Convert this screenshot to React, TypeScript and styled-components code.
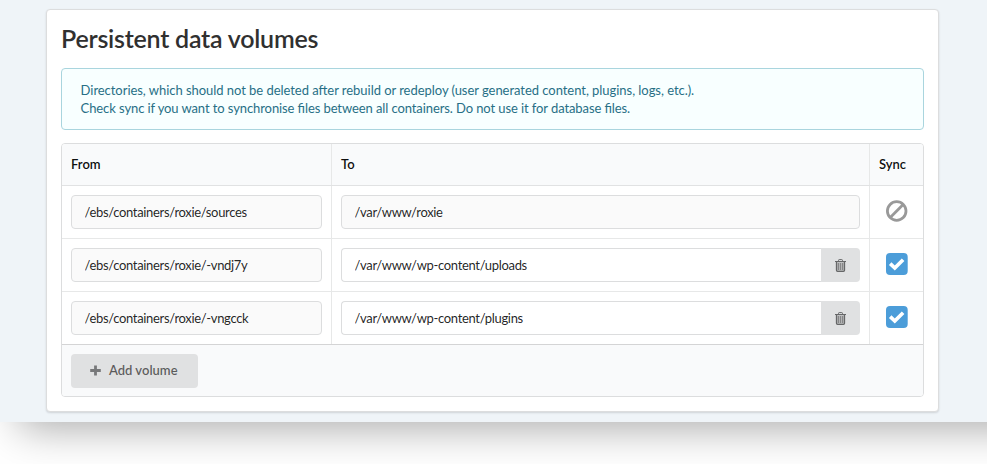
import React from "react";
import styled, { createGlobalStyle } from "styled-components";

const GlobalStyle = createGlobalStyle`
  *, *::before, *::after { box-sizing: border-box; }
  body {
    margin: 0;
    background: #fff;
    color: rgba(0, 0, 0, 0.87);
    font-family: Lato, "Liberation Sans", sans-serif;
    font-size: 13px;
    line-height: 18px;
  }
`;

const Viewport = styled.div`
  height: 464px;
  overflow: hidden;
`;

const Page = styled.main`
  width: 1100px;
  height: 422px;
  padding: 9px 0 0 46px;
  background: #eff4f8;
  box-shadow: 19px 6px 40px rgba(0, 0, 0, 0.34);
`;

const Card = styled.section`
  width: 893px;
  height: 403px;
  padding: 13px 14px 14px;
  background: #fff;
  border: 1px solid #dcddde;
  border-radius: 4px;
  box-shadow: 0 1px 2px rgba(34, 36, 38, 0.15);
`;

const Title = styled.h2`
  margin: 0 0 14px;
  font-size: 25px;
  line-height: 31px;
  font-weight: 600;
  letter-spacing: -0.23px;
  color: #303030;
`;

const Notice = styled.p`
  margin: 0 0 13px;
  height: 62px;
  padding: 12px 18.6px;
  border: 1px solid #a9d5de;
  border-radius: 4px;
  background: #f8ffff;
  color: #276f86;
`;

const NoticeLine = styled.span<{ $tracking: number }>`
  display: block;
  letter-spacing: ${(p) => p.$tracking}px;
  font-feature-settings: "liga" 1;
  white-space: nowrap;
`;

const Table = styled.div`
  border: 1px solid #dcddde;
  border-radius: 4px;
  overflow: hidden;
`;

const Row = styled.div<{ $last?: boolean }>`
  display: grid;
  grid-template-columns: 270px 538px 53px;
  height: 53px;
  border-bottom: 1px solid ${(p) => (p.$last ? "#d4d4d5" : "#e7e8e8")};
`;

const HeaderRow = styled(Row)`
  height: 42px;
  background: #f9fafb;
  border-bottom-color: #e1e2e3;
  color: rgba(0, 0, 0, 0.95);
  font-weight: 600;
`;

const Cell = styled.div<{ $center?: boolean }>`
  display: flex;
  align-items: center;
  justify-content: ${(p) => (p.$center ? "center" : "flex-start")};
  padding: 0 9px;
  border-right: 1px solid #e7e8e8;
  &:last-child { border-right: 0; }
`;

const HeaderCell = styled(Cell)`
  padding-bottom: 1px;
`;

const SyncCell = styled(Cell)`
  padding: 0 0 2px;
`;

const Field = styled.div`
  display: flex;
  width: 100%;
  height: 34px;
`;

const Input = styled.input<{ $joined?: boolean }>`
  flex: 1;
  min-width: 0;
  padding: 0 12.5px;
  border: 1px solid #dcddde;
  border-right-width: ${(p) => (p.$joined ? 0 : 1)}px;
  border-radius: ${(p) => (p.$joined ? "4px 0 0 4px" : "4px")};
  background: #fff;
  color: rgba(0, 0, 0, 0.87);
  font: inherit;
  letter-spacing: -0.33px;
  outline: 0;
  &:read-only { background: #fafafa; }
`;

const DeleteButton = styled.button`
  display: flex;
  align-items: center;
  justify-content: center;
  width: 39px;
  padding: 1px 0 0;
  border: 0;
  border-radius: 0 4px 4px 0;
  background: #e0e1e2;
`;

const Footer = styled.div`
  height: 51px;
  padding: 9px;
  background: #f9fafb;
`;

const AddButton = styled.button`
  display: flex;
  align-items: center;
  gap: 8px;
  width: 127px;
  height: 34px;
  padding: 0 0 2px 19px;
  border: 0;
  border-radius: 4px;
  background: #e0e1e2;
  color: rgba(0, 0, 0, 0.6);
  font: inherit;
  font-weight: 600;
`;

const Icon = styled.svg`
  display: block;
  flex: none;
`;

const TrashIcon = () => (
  <Icon width="11" height="13" viewBox="0 0 11 13" fill="none" stroke="#666768">
    <path d="M2 3.2h7v8.5H2z" fill="#b4b5b6" stroke="none" />
    <path d="M3.5 2V1.4Q3.5.6 4.2.6h2.6q.7 0 .7.8V2" />
    <path d="M0 2.5h11" strokeWidth="1.2" />
    <path d="M1.5 3v8.2q0 1.1 1 1.1h6q1 0 1-1.1V3" strokeWidth="1.3" />
    <path d="M3.5 4v7M5.5 4v7M7.5 4v7" strokeWidth=".6" />
  </Icon>
);

const BanIcon = () => (
  <Icon width="22" height="22" viewBox="0 0 22 22" fill="none" stroke="#999" strokeWidth="2.8">
    <circle cx="10.7" cy="11" r="9.3" />
    <path d="M4.5 17.2 16.9 4.8" />
  </Icon>
);

const CheckedIcon = () => (
  <Icon width="22" height="22" viewBox="0 0 22 22">
    <rect width="21.7" height="22" rx="4" fill="#4c9dd9" />
    <path d="M4.2 10.6 8.8 15 17.1 6.8" fill="none" stroke="#fff" strokeWidth="3.7" />
  </Icon>
);

const PlusIcon = () => (
  <Icon width="11" height="11" viewBox="0 0 11 11">
    <path d="M5.5.5v10M.2 5.5h10.6" stroke="#77787a" strokeWidth="2.8" />
  </Icon>
);

const volumes = [
  { from: "/ebs/containers/roxie/sources", to: "/var/www/roxie", locked: true },
  { from: "/ebs/containers/roxie/-vndj7y", to: "/var/www/wp-content/uploads", locked: false },
  { from: "/ebs/containers/roxie/-vngcck", to: "/var/www/wp-content/plugins", locked: false },
];

export default function App() {
  return (
    <Viewport>
      <GlobalStyle />
      <Page>
        <Card>
          <Title>Persistent data volumes</Title>
          <Notice>
            <NoticeLine $tracking={-0.044}>
              Directories, which should not be deleted after rebuild or redeploy (user generated content, plugins, logs, etc.).
            </NoticeLine>
            <NoticeLine $tracking={-0.095}>
              Check sync if you want to synchronise files between all containers. Do not use it for database files.
            </NoticeLine>
          </Notice>
          <Table>
            <HeaderRow>
              <HeaderCell>From</HeaderCell>
              <HeaderCell>To</HeaderCell>
              <HeaderCell>Sync</HeaderCell>
            </HeaderRow>
            {volumes.map((v, i) => (
              <Row key={v.from} $last={i === volumes.length - 1}>
                <Cell>
                  <Field>
                    <Input readOnly defaultValue={v.from} />
                  </Field>
                </Cell>
                <Cell>
                  <Field>
                    <Input readOnly={v.locked} defaultValue={v.to} $joined={!v.locked} />
                    {!v.locked && (
                      <DeleteButton aria-label="Delete volume">
                        <TrashIcon />
                      </DeleteButton>
                    )}
                  </Field>
                </Cell>
                <SyncCell $center>{v.locked ? <BanIcon /> : <CheckedIcon />}</SyncCell>
              </Row>
            ))}
            <Footer>
              <AddButton>
                <PlusIcon />
                Add volume
              </AddButton>
            </Footer>
          </Table>
        </Card>
      </Page>
    </Viewport>
  );
}
